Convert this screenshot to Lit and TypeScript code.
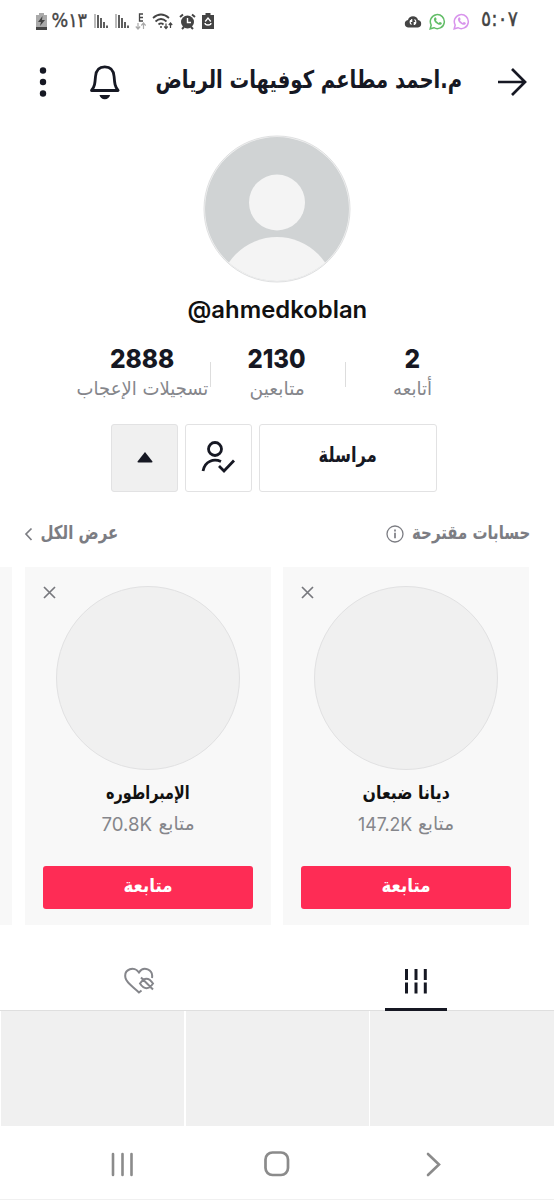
import { LitElement, html, css } from "lit";
import { customElement, property } from "lit/decorators.js";
import { styleMap } from "lit/directives/style-map.js";

interface Account { name: string; nameWidth: number; count: string; countWidth: number; }

/** One line of text scaled horizontally to an exact width. */
@customElement("fit-text")
class FitText extends LitElement {
  @property({ type: Number }) width = 0;
  @property() text = "";
  @property() lang = "ar";
  static styles = css`
    :host { display: block; flex: none; line-height: 1; white-space: nowrap; }
    .box { display: flex; justify-content: center; }
    .run { flex: none; display: block; transform-origin: center; }
  `;
  updated() {
    const run = this.renderRoot.querySelector(".run") as HTMLElement;
    run.style.transform = "none";
    const natural = run.offsetWidth;
    if (natural) {
      run.style.margin = `0 ${(this.width - natural) / 2}px`;
      run.style.transform = `scaleX(${this.width / natural})`;
    }
  }
  render() {
    return html`<div class="box" style=${styleMap({ width: `${this.width}px` })}>
      <span class="run" dir=${this.lang === "ar" ? "rtl" : "ltr"}>${this.text}</span></div>`;
  }
}

const whatsapp = (color: string) => html`<svg width="17" height="17" viewBox="0 0 17 17" fill="none" stroke=${color}>
  <path stroke-width="1.5" d="M1.2 15.8l1-3.8a7 7 0 1 1 2.7 2.7z"/>
  <path fill=${color} stroke="none" d="M5.8 4.4c.5-.4 1-.2 1.200.3l.6 1.300c.1.4-.5 1-.6 1.200.7 1.300 1.600 2.100 2.900 2.700.4-.3.7-1 1.200-.9l1.500.7c.5.3.1 1.200-.4 1.700-1.200 1-3.200.2-4.500-.8C6.200 9.400 5 8 4.900 6.500c0-.8.3-1.700.9-2.100z"/></svg>`;

const signal = html`<svg width="14" height="16" viewBox="0 0 14 16">
  <path stroke="#aaa" stroke-width="1.600" d="M1 1v14"/><path stroke="#444" stroke-width="1.700" d="M4 2v13M7 5v10"/><path stroke="#444" stroke-width="1.700" d="M10 9v6M13 12.500v2.500"/></svg>`;

@customElement("app-root")
class AppRoot extends LitElement {
  accounts: Account[] = [
    { name: "الإمبراطوره", nameWidth: 84, count: "70.8K", countWidth: 51 },
    { name: "ديانا ضبعان", nameWidth: 87, count: "147.2K", countWidth: 54 },
  ];
  stats = [
    { n: "2888", nw: 64, label: "تسجيلات الإعجاب", lw: 132 },
    { n: "2130", nw: 58, label: "متابعين", lw: 55 },
    { n: "2", nw: 16, label: "أتابعه", lw: 39 },
  ];
  static styles = css`
    :host { display: block; width: 554px; height: 1200px; overflow: hidden; background: #fff; color: #161823;
      font-family: "DejaVu Sans", sans-serif; }
    * { box-sizing: border-box; }
    svg { display: block; flex: none; }
    .page { display: flex; flex-direction: column; height: 1200px; }
    .status { height: 42px; padding: 0 36px 0 36px; display: flex; align-items: center; justify-content: space-between; color: #444; }
    .group { display: flex; align-items: center; }
    .left { gap: 6.2px; }
    .right { gap: 7px; }
    .see { gap: 7px; }
    .tip { gap: 8px; }
    .st { font-size: 20px; font-weight: 400; -webkit-text-stroke: .4px; padding-bottom: 2px; margin: 0 1px 0 -2px; }
    .time { margin: 0 0 0 4px; padding-bottom: 3px; font-size: 21px; }
    .header { height: 80px; display: flex; align-items: center; padding: 0 27px 0 36px; }
    .bell { margin-left: 39px; }
    .title { font-size: 24.5px; font-weight: 700; margin-left: 34px; margin-right: 35px; padding-bottom: 3px; }
    .avatar { margin: 13px auto 0 203px; }
    .user { height: 28px; margin-top: 13px; display: flex; align-items: center; justify-content: center; font-size: 24px; font-weight: 600; color: #111; font-family: "Inter", sans-serif; }
    .stats { display: flex; margin: 22px 0 0 74.500px; height: 60px; }
    .stat { width: 135px; display: flex; flex-direction: column; align-items: center; }
    .num { font: 800 26px/1 "Inter", sans-serif; height: 27px; }
    .label { font-size: 19px; color: #85868b; margin-top: 6px; }
    .rule { width: 1px; height: 25px; margin: 16px -1px 0 0; background: #ddd; }
    .actions { display: flex; gap: 7px; margin: 18px 0 0 111px; height: 68px; }
    .btn { width: 67px; border: 1.500px solid #e2e2e3; border-radius: 3px; display: grid; place-items: center; padding-bottom: 2px; }
    .shade { background: #f0f0f0; }
    .wide { width: 178px; font-size: 21px; font-weight: 700; padding-bottom: 6px; }
    .sug { height: 28px; margin: 28px 24px 0; display: flex; align-items: center; justify-content: space-between; color: #7c7d83; font-size: 19px; font-weight: 600; }
    .sug fit-text { padding-bottom: 3px; }
    .cards { height: 358px; margin-top: 19px; display: flex; gap: 12px; overflow: hidden; }
    .card { width: 246px; flex: none; background: #f8f8f8; display: flex; flex-direction: column; align-items: center; }
    .sliver { width: 12px; margin-right: 1px; flex: none; background: #f8f8f8; }
    .top { width: 100%; height: 203px; display: flex; padding: 19px 0 0 18px; }
    .face { width: 184px; height: 184px; border: 1px solid #e1e1e2; background: #f0f0f0; border-radius: 50%; }
    .name { margin-top: 14px; height: 20px; font-size: 18.500px; font-weight: 700; color: #111; }
    .fol { margin-top: 10px; height: 20px; display: flex; gap: 6px; color: #85868b; font-size: 18.500px; align-items: center; }
    .lat { font: 400 19px/1 "Inter", sans-serif; }
    .follow { width: 210px; height: 43px; margin-top: 32px; padding-bottom: 5px; background: #fe2c55; border-radius: 3px; color: #fff; display: grid; place-items: center; font-size: 19px; font-weight: 700; }
    .tabs { display: flex; height: 86px; padding: 25px 0 0; border-bottom: 1px solid #dfdfdf; }
    .tab { width: 277px; display: flex; flex-direction: column; align-items: center; padding-top: 17px; }
    .tab.active { justify-content: space-between; }
    .bar { width: 62px; height: 3px; background: #161823; margin-bottom: -1px; }
    .grid { height: 115px; display: grid; grid-template-columns: 183px 183px 184px; gap: 1.500px; padding-left: 1px; }
    .cell { background: #f0f0f0; }
    .nav { height: 74px; display: flex; align-items: center; justify-content: space-between; padding: 3px 113px 0 110px; border-bottom: 1px solid #f0f0f0; }
    .home { margin-right: 7px; }
  `;

  card(a: Account) {
    return html`<section class="card">
      <div class="top">
        <svg width="13" height="13" viewBox="0 0 13 13" stroke="#77787d" stroke-width="1.700"><path d="M1 1l11 11M12 1L1 12"/></svg>
        <div class="face"></div>
      </div>
      <fit-text class="name" .text=${a.name} .width=${a.nameWidth}></fit-text>
      <div class="fol"><fit-text class="lat" .lang=${"en"} .text=${a.count} .width=${a.countWidth}></fit-text><fit-text .text=${"متابع"} .width=${36}></fit-text></div>
      <div class="follow"><fit-text .text=${"متابعة"} .width=${49}></fit-text></div>
    </section>`;
  }

  render() {
    return html`<main class="page">
      <div class="status">
        <div class="group left">
          <svg width="11" height="17" viewBox="0 0 11 17"><path fill="#aaa" d="M3 0h5v2h3v12H0V2h3z"/><path fill="#444" d="M0 14h11v3H0zM6.500 3L2 9h3l-1 4 5-6H6z"/></svg>
          <fit-text class="st" .text=${"١٣%"} .width=${36}></fit-text>
          ${signal}${signal}
          <svg width="11" height="17" viewBox="0 0 11 17" fill="none"><path stroke="#444" stroke-width="1.300" d="M8 1H4.500v7H8M4.500 4.500H8"/><path stroke="#aaa" stroke-width="1.200" d="M3 10v6M.8 13.500L3 16l2.200-2.500M8.500 16v-6M6.300 12.500L8.500 10l2.200 2.500"/></svg>
          <svg width="21" height="17" viewBox="0 0 21 17" fill="none" stroke="#444" stroke-width="1.700"><path d="M1 5q8-7 16 0M3.500 8.500q5.500-5 11 0M6.500 11.500q2.500-2.300 5 0"/><circle cx="9" cy="14" r="1" fill="#444" stroke="none"/><path stroke-width="1.200" d="M14 10.500v5M12.300 13.500l1.700 2 1.700-2M18.500 15v-5M16.800 12l1.700-2 1.700 2"/></svg>
          <svg width="17" height="17" viewBox="0 0 17 17"><circle cx="8.500" cy="9" r="6.500" fill="#444"/><path stroke="#444" stroke-width="2" d="M1 4l3-2.500M16 4l-3-2.500M3 16l2-2M14 16l-2-2"/><path stroke="#fff" stroke-width="1.400" fill="none" d="M8.500 5v4.500H12"/></svg>
          <svg width="12" height="16" viewBox="0 0 12 16"><path fill="#444" d="M3.500 0h5v2H12v14H0V2h3.500z"/><path fill="none" stroke="#fff" stroke-width="1.300" d="M3.200 8.500L6 5l2.800 3.500M3 10q0 2 3 2t3-2"/></svg>
        </div>
        <div class="group right">
          <svg width="18" height="13" viewBox="0 0 18 13"><path fill="#444" d="M4 12.500a3.800 3.800 0 0 1 0-7.500 5.200 5.200 0 0 1 10 0 3.800 3.800 0 0 1 0 7.500z"/><path fill="none" stroke="#fff" stroke-width="1.200" d="M7.500 4.500A3 3 0 0 0 7.500 9.500M10.500 4.500A3 3 0 0 1 10.500 9.500M7.700 4v2.500H6M10.300 10V7.500H12"/></svg>
          ${whatsapp("#62bd67")}${whatsapp("#d894ec")}
          <fit-text class="st time" .lang=${"en"} .text=${"٥:٠٧"} .width=${37}></fit-text>
        </div>
      </div>
      <header class="header">
        <svg width="14" height="32" viewBox="0 0 14 32" fill="#161823"><circle cx="7" cy="4.500" r="3.200"/><circle cx="7" cy="16" r="3.200"/><circle cx="7" cy="27.500" r="3.200"/></svg>
        <svg class="bell" width="32" height="36" viewBox="0 0 32 36" fill="none"><path stroke="#161823" stroke-width="2.800" stroke-linejoin="round" d="M2.500 26.500C5.800 22.500 6 19 6.500 12.500C7 6 10.500 2.800 15.800 2.800S24.600 6 25.100 12.500C25.600 19 25.800 22.500 29.100 26.500Z"/><path fill="#161823" d="M10.500 31h10.600c-.6 2.600-2.500 4.200-5.300 4.200s-4.700-1.600-5.300-4.200z"/></svg>
        <fit-text class="title" .text=${"م.احمد مطاعم كوفيهات الرياض"} .width=${307}></fit-text>
        <svg width="30" height="30" viewBox="0 0 30 30" fill="none" stroke="#161823" stroke-width="2.700"><path d="M1 15h26M15 2l13 13-13 13"/></svg>
      </header>
      <svg class="avatar" width="148" height="148" viewBox="0 0 148 148"><defs><clipPath id="face"><circle cx="74" cy="74" r="72"/></clipPath></defs><circle cx="74" cy="74" r="73" fill="#f4f4f4" stroke="#dedfe0"/><g clip-path="url(#face)"><path fill="#d0d3d4" d="M0 0h148v148H0z"/><circle cx="74" cy="67.500" r="28" fill="#f4f4f4"/><circle cx="74" cy="160" r="58" fill="#f4f4f4"/></g></svg>
      <div class="user"><fit-text .lang=${"en"} .text=${"@ahmedkoblan"} .width=${180}></fit-text></div>
      <div class="stats">${this.stats.map((s, i) => html`${i ? html`<i class="rule"></i>` : ""}<div class="stat">
        <fit-text class="num" .lang=${"en"} .text=${s.n} .width=${s.nw}></fit-text><fit-text class="label" .text=${s.label} .width=${s.lw}></fit-text></div>`)}</div>
      <div class="actions">
        <div class="btn shade"><svg width="16" height="11" viewBox="0 0 16 11"><path fill="#161823" d="M8 0l7.500 9.500q.2 1-1 1h-13q-1.200 0-1-1z"/></svg></div>
        <div class="btn"><svg width="36" height="34" viewBox="0 0 36 34" fill="none" stroke="#161823" stroke-width="2.800"><circle cx="14" cy="9" r="6.500"/><path d="M2 31C4 20.500 13 18.500 20 21.500M18 26l5 5 10-10.500"/></svg></div>
        <div class="btn wide"><fit-text .text=${"مراسلة"} .width=${58}></fit-text></div>
      </div>
      <div class="sug">
        <div class="group see"><svg width="9" height="14" viewBox="0 0 9 14" fill="none" stroke="#7c7d83" stroke-width="1.700"><path d="M7.500 1.500L2 7l5.500 6"/></svg><fit-text .text=${"عرض الكل"} .width=${78}></fit-text></div>
        <div class="group tip"><svg width="18" height="18" viewBox="0 0 18 18" fill="none" stroke="#7c7d83" stroke-width="1.300"><circle cx="9" cy="9" r="8"/><path stroke-width="1.700" d="M9 4.500v1.900M9 7.800v5.500"/></svg><fit-text .text=${"حسابات مقترحة"} .width=${118}></fit-text></div>
      </div>
      <div class="cards"><div class="sliver"></div>${this.accounts.map((a) => this.card(a))}</div>
      <div class="tabs">
        <div class="tab"><svg width="32" height="28" viewBox="0 0 32 28" fill="none" stroke="#85868b" stroke-width="2"><path d="M29 11C30.500 2.500 20.500-1.500 16 5.500C11.500-1.500 .5 2 2.500 11C3.500 16 10.500 20 16 25.500L18.500 23.500"/><path d="M17 16.500q6.500-9.500 13 0q-6.500 9.500-13 0zM18 10.500L30 22.500"/></svg></div>
        <div class="tab active"><svg width="24" height="28" viewBox="0 0 24 28" stroke="#161823" stroke-width="3"><path d="M2.500 2v11M12 2v11M21.300 2v11M2.500 15.500v11M12 15.500v11M21.300 15.500v11"/></svg><div class="bar"></div></div>
      </div>
      <div class="grid"><div class="cell"></div><div class="cell"></div><div class="cell"></div></div>
      <nav class="nav">
        <svg width="25" height="25" viewBox="0 0 25 25" stroke="#8b8b8b" stroke-width="2.600" stroke-linecap="round"><path d="M3 2v21M12.500 2v21M21.500 2v21"/></svg>
        <svg class="home" width="26" height="26" viewBox="0 0 26 26" fill="none" stroke="#8b8b8b" stroke-width="2.700"><rect x="1.500" y="1.500" width="22.500" height="22.500" rx="7"/></svg>
        <svg width="15" height="25" viewBox="0 0 15 25" fill="none" stroke="#8b8b8b" stroke-width="2.600" stroke-linecap="round"><path d="M2 2l11 10.500L2 23"/></svg>
      </nav>
    </main>`;
  }
}
